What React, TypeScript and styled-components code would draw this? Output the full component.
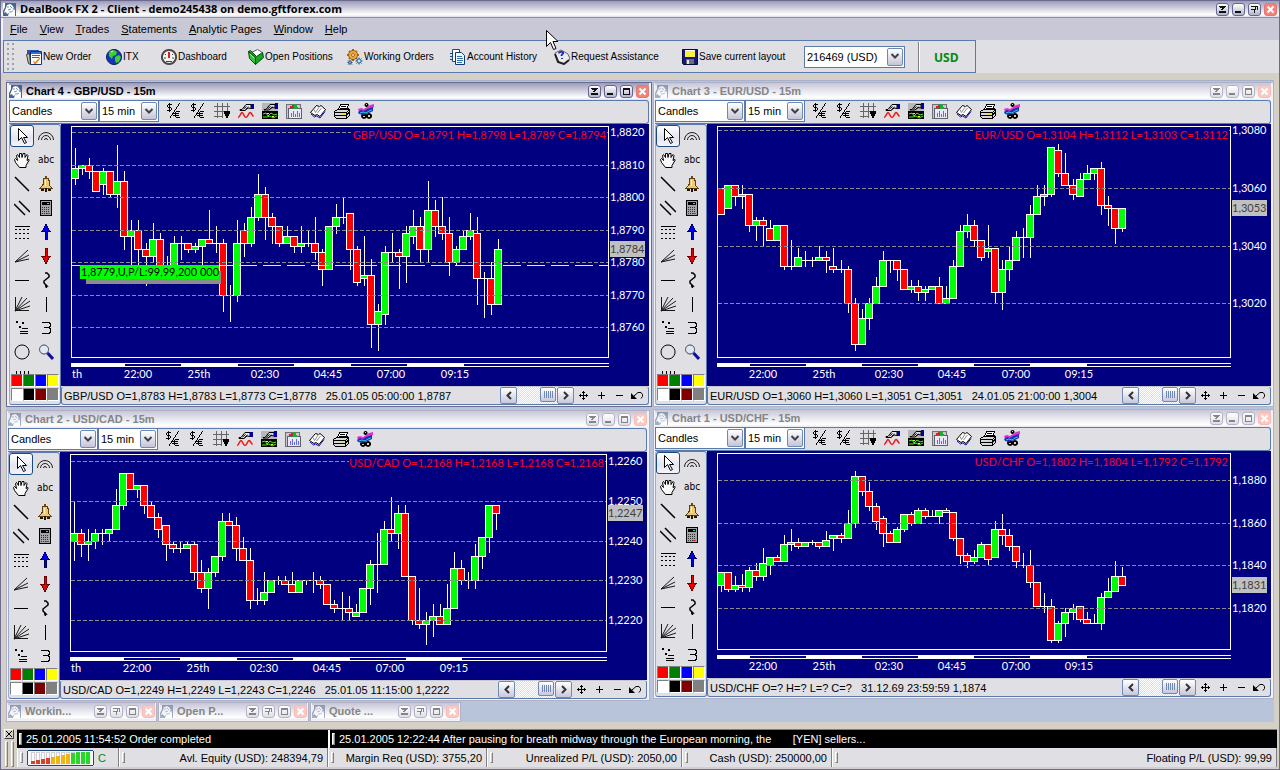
import React from "react";
import styled, { createGlobalStyle } from "styled-components";

const c = {
  face: "#e0dfe3",
  menu: "#c8c8d6",
  tan: "#d4d0c8",
  desk: "#b7c4da",
  line: "#5a7aae",
  edge: "#6b6b92",
  edgeOff: "#b0b0c6",
  navy: "#000080",
  up: "#00ff00",
  down: "#ff0000",
};

const GlobalStyle = createGlobalStyle`
  *, *::before, *::after { box-sizing: border-box; }
  body {
    margin: 0;
    background: ${c.tan};
    color: #000;
    font: 11px/14px "Liberation Sans", Arial, sans-serif;
  }
  button, select { font: inherit; color: inherit; padding: 0; margin: 0; border: 0; background: none; }
`;

/* ---------- market data: [open, high, low, close] in pips ---------- */

type Candle = [number, number, number, number];

const GBPUSD: Candle[] = [
  [8806, 8815, 8804, 8809], [8809, 8810, 8807, 8810], [8810, 8812, 8806, 8808], [8808, 8808, 8802, 8802],
  [8804, 8809, 8801, 8808], [8808, 8808, 8800, 8801], [8801, 8816, 8797, 8805], [8805, 8808, 8784, 8788],
  [8788, 8793, 8778, 8790], [8790, 8793, 8779, 8784], [8784, 8786, 8773, 8782], [8782, 8792, 8780, 8787],
  [8787, 8789, 8776, 8778], [8778, 8782, 8776, 8778], [8778, 8788, 8776, 8786], [8786, 8788, 8781, 8786],
  [8786, 8786, 8783, 8784], [8784, 8786, 8783, 8785], [8785, 8787, 8779, 8787], [8787, 8796, 8786, 8786],
  [8786, 8791, 8783, 8786], [8786, 8787, 8765, 8770], [8770, 8773, 8762, 8770], [8770, 8793, 8768, 8786],
  [8790, 8792, 8782, 8786], [8786, 8797, 8785, 8794], [8794, 8807, 8793, 8801], [8801, 8803, 8787, 8794],
  [8794, 8795, 8786, 8791], [8791, 8791, 8785, 8786], [8786, 8791, 8786, 8788], [8788, 8788, 8783, 8785],
  [8785, 8791, 8783, 8786], [8786, 8790, 8785, 8786], [8786, 8794, 8781, 8783], [8783, 8784, 8773, 8778],
  [8778, 8791, 8778, 8791], [8791, 8798, 8789, 8794], [8794, 8800, 8792, 8794], [8795, 8795, 8778, 8784],
  [8784, 8785, 8773, 8774], [8775, 8788, 8773, 8776], [8776, 8781, 8754, 8761], [8761, 8767, 8753, 8765],
  [8764, 8785, 8761, 8783], [8783, 8789, 8780, 8783], [8783, 8784, 8772, 8782], [8782, 8791, 8774, 8789],
  [8788, 8796, 8786, 8791], [8791, 8794, 8780, 8784], [8784, 8805, 8780, 8796], [8796, 8799, 8788, 8791],
  [8791, 8800, 8787, 8789], [8789, 8794, 8776, 8780], [8780, 8785, 8779, 8784], [8784, 8790, 8784, 8788],
  [8788, 8795, 8787, 8790], [8789, 8794, 8767, 8775], [8775, 8777, 8763, 8775], [8775, 8780, 8764, 8767],
  [8767, 8787, 8767, 8784],
];

const EURUSD: Candle[] = [
  [3060, 3060, 3051, 3051], [3053, 3061, 3053, 3061], [3061, 3061, 3054, 3057], [3057, 3061, 3053, 3058],
  [3058, 3058, 3045, 3047], [3047, 3050, 3042, 3049], [3049, 3050, 3040, 3047], [3046, 3049, 3042, 3042],
  [3042, 3047, 3042, 3047], [3047, 3047, 3032, 3033], [3033, 3042, 3032, 3033], [3033, 3039, 3033, 3036],
  [3035, 3038, 3033, 3035], [3035, 3036, 3033, 3035], [3035, 3040, 3035, 3036], [3036, 3038, 3031, 3035],
  [3033, 3039, 3031, 3032], [3032, 3035, 3031, 3032], [3032, 3033, 3017, 3020], [3020, 3022, 3004, 3006],
  [3006, 3018, 3006, 3015], [3015, 3022, 3011, 3020], [3020, 3029, 3020, 3026], [3026, 3038, 3026, 3035],
  [3035, 3035, 3031, 3035], [3035, 3035, 3028, 3032], [3032, 3032, 3025, 3025], [3025, 3028, 3024, 3026],
  [3026, 3028, 3021, 3024], [3024, 3026, 3021, 3025], [3025, 3026, 3025, 3026], [3026, 3029, 3020, 3020],
  [3020, 3026, 3020, 3022], [3022, 3035, 3022, 3033], [3033, 3047, 3033, 3045], [3045, 3051, 3043, 3047],
  [3047, 3049, 3040, 3042], [3042, 3042, 3035, 3036], [3038, 3047, 3036, 3039], [3039, 3039, 3020, 3024],
  [3024, 3035, 3018, 3032], [3032, 3040, 3028, 3035], [3035, 3045, 3035, 3043], [3043, 3046, 3036, 3043],
  [3043, 3054, 3036, 3051], [3051, 3061, 3051, 3057], [3057, 3061, 3054, 3058], [3058, 3074, 3057, 3074],
  [3073, 3075, 3064, 3065], [3065, 3072, 3061, 3061], [3061, 3063, 3056, 3058], [3057, 3065, 3057, 3063],
  [3063, 3068, 3063, 3065], [3065, 3067, 3063, 3067], [3067, 3069, 3051, 3054], [3054, 3057, 3047, 3053],
  [3053, 3053, 3041, 3046], [3046, 3053, 3045, 3053],
];

const USDCAD: Candle[] = [
  [2240, 2250, 2235, 2242], [2242, 2243, 2236, 2239], [2239, 2243, 2235, 2240], [2240, 2243, 2238, 2242],
  [2242, 2243, 2239, 2242], [2242, 2243, 2240, 2243], [2243, 2253, 2243, 2249], [2249, 2257, 2248, 2257],
  [2257, 2257, 2253, 2253], [2253, 2254, 2251, 2254], [2254, 2254, 2247, 2249], [2249, 2250, 2246, 2246],
  [2246, 2247, 2241, 2243], [2244, 2244, 2235, 2239], [2239, 2240, 2237, 2238], [2238, 2240, 2237, 2238],
  [2238, 2240, 2238, 2239], [2239, 2240, 2230, 2232], [2232, 2235, 2227, 2228], [2228, 2233, 2223, 2232],
  [2232, 2236, 2231, 2236], [2236, 2247, 2235, 2245], [2245, 2247, 2244, 2244], [2244, 2246, 2235, 2238],
  [2238, 2241, 2235, 2235], [2235, 2238, 2223, 2225], [2225, 2228, 2224, 2225], [2225, 2232, 2224, 2227],
  [2227, 2230, 2227, 2230], [2230, 2231, 2229, 2230], [2230, 2231, 2229, 2229], [2229, 2232, 2227, 2227],
  [2227, 2230, 2227, 2230], [2230, 2230, 2229, 2230], [2230, 2232, 2227, 2230], [2230, 2231, 2228, 2229],
  [2229, 2229, 2224, 2224], [2224, 2225, 2222, 2223], [2223, 2227, 2220, 2223], [2223, 2226, 2220, 2222],
  [2221, 2224, 2221, 2222], [2222, 2228, 2222, 2228], [2228, 2235, 2224, 2234], [2234, 2242, 2227, 2234],
  [2234, 2245, 2234, 2243], [2243, 2251, 2240, 2242], [2242, 2249, 2238, 2247], [2247, 2249, 2231, 2231],
  [2231, 2231, 2219, 2220], [2220, 2228, 2218, 2219], [2219, 2222, 2214, 2220], [2220, 2224, 2216, 2221],
  [2221, 2224, 2219, 2219], [2219, 2229, 2219, 2223], [2223, 2237, 2223, 2233], [2233, 2235, 2229, 2230],
  [2230, 2232, 2228, 2230], [2230, 2239, 2228, 2236], [2236, 2241, 2233, 2241], [2241, 2249, 2237, 2249],
  [2249, 2249, 2243, 2247],
];

const USDCHF: Candle[] = [
  [1831, 1837, 1828, 1837], [1837, 1837, 1828, 1829], [1829, 1835, 1828, 1831], [1831, 1836, 1828, 1830],
  [1830, 1839, 1828, 1838], [1838, 1841, 1833, 1835], [1835, 1848, 1833, 1841], [1840, 1844, 1836, 1844],
  [1844, 1845, 1842, 1842], [1842, 1854, 1842, 1850], [1850, 1857, 1847, 1851], [1851, 1853, 1848, 1849],
  [1849, 1851, 1849, 1851], [1851, 1852, 1850, 1851], [1851, 1851, 1848, 1849], [1849, 1856, 1849, 1852],
  [1853, 1854, 1847, 1854], [1854, 1855, 1851, 1853], [1853, 1866, 1853, 1860], [1860, 1884, 1858, 1882],
  [1882, 1882, 1873, 1875], [1875, 1879, 1866, 1868], [1868, 1869, 1857, 1861], [1862, 1863, 1849, 1855],
  [1855, 1856, 1851, 1851], [1851, 1858, 1851, 1857], [1857, 1864, 1856, 1864], [1864, 1865, 1859, 1860],
  [1860, 1867, 1860, 1866], [1866, 1867, 1862, 1863], [1863, 1866, 1863, 1863], [1863, 1866, 1860, 1866],
  [1866, 1867, 1865, 1865], [1865, 1865, 1852, 1853], [1853, 1853, 1841, 1845], [1845, 1846, 1839, 1842],
  [1842, 1847, 1841, 1844], [1844, 1851, 1844, 1850], [1850, 1850, 1840, 1843], [1844, 1861, 1844, 1857],
  [1857, 1864, 1850, 1854], [1854, 1857, 1847, 1849], [1849, 1849, 1839, 1842], [1840, 1846, 1839, 1840],
  [1840, 1847, 1830, 1832], [1832, 1832, 1821, 1821], [1821, 1827, 1818, 1821], [1821, 1824, 1804, 1805],
  [1805, 1814, 1804, 1813], [1813, 1820, 1807, 1818], [1818, 1822, 1815, 1820], [1821, 1821, 1814, 1815],
  [1815, 1818, 1813, 1813], [1813, 1817, 1813, 1813], [1813, 1827, 1810, 1825], [1825, 1834, 1825, 1828],
  [1828, 1842, 1828, 1835], [1835, 1839, 1831, 1831],
];

/* ---------- application frame ---------- */

const Frame = styled.div`
  position: relative;
  min-height: 100vh;
  display: flex;
  flex-direction: column;
  background: ${c.tan};
  border: 1px solid ${c.edge};
`;

const TitleBar = styled.header<{ $off?: boolean }>`
  display: flex;
  align-items: center;
  gap: 4px;
  height: 17px;
  padding-bottom: 1px;
  background: ${(p) =>
    p.$off
      ? "linear-gradient(#c6c6d8, #e6e6ee 45%, #ffffff 85%, #e8e8f0)"
      : "linear-gradient(#9c9cba, #cfcfde 45%, #ffffff 85%, #dcdce8)"};
  color: ${(p) => (p.$off ? "#858585" : "#000")};
`;

const MainTitle = styled(TitleBar)`
  padding: 0 2px;
  border-bottom: 1px solid #8c8cac;
`;

const TitleText = styled.h2`
  flex: 1;
  margin: 0;
  font-size: 11px;
  font-weight: bold;
  white-space: nowrap;
  overflow: hidden;
`;

const AppName = styled.h1`
  flex: 1;
  margin: 0;
  font: bold 11px/14px "Open Sans", "Liberation Sans", sans-serif;
`;

const Caption = styled.div`
  display: flex;
  gap: 3px;
`;

const CapButton = styled.button<{ $off?: boolean; $close?: boolean }>`
  width: 13px;
  height: 13px;
  display: grid;
  place-items: center;
  border: 1px solid ${(p) => (p.$close ? (p.$off ? "#f6bcb4" : "#e07a70") : p.$off ? "#b4b4c6" : "#66668c")};
  border-radius: 3px;
  background: ${(p) =>
    p.$close
      ? p.$off ? "#fbc8c2" : "#f2827a"
      : p.$off ? "linear-gradient(#fff, #dedee8)" : "linear-gradient(#fff, #b4b4cc)"};
  color: ${(p) => (p.$close ? "#fff" : p.$off ? "#858585" : "#111")};
`;

const MenuBar = styled.nav`
  display: flex;
  align-items: center;
  gap: 12px;
  height: 22px;
  padding: 0 7px;
  background: ${c.menu};
  border-left: 2px solid #f4f4f8;
`;

const MenuLink = styled.button`
  &::first-letter { text-decoration: underline; }
  display: block;
`;

const ToolRow = styled.div`
  display: flex;
  height: 33px;
  padding-left: 2px;
  background: ${c.face};
`;

const MainTools = styled.div`
  display: flex;
  align-items: center;
  width: 973px;
  border: 1px solid ${c.line};
  padding-left: 3px;
`;

const DotGrip = styled.span`
  width: 7px;
  height: 27px;
  margin-right: 12px;
  background: radial-gradient(circle at 1px 1px, #a0a0a4 1px, transparent 1px) 0 0 / 5px 5px;
`;

const ToolButton = styled.button<{ $w: number }>`
  display: flex;
  align-items: center;
  gap: 1px;
  width: ${(p) => p.$w}px;
  font-size: 10px;
  white-space: nowrap;
  text-align: left;
`;

const Divider = styled.span`
  width: 2px;
  height: 30px;
  margin: 0 14px 0 13px;
  background: #808080;
  border-right: 1px solid #fff;
`;

const Currency = styled.strong`
  padding-top: 3px;
  font: bold 12px/16px "Open Sans", "Liberation Sans", sans-serif;
  color: #008a0e;
`;

const ComboBox = styled.span<{ $w: number }>`
  display: grid;
  grid-template-columns: 1fr;
  align-items: center;
  width: ${(p) => p.$w}px;
  height: 22px;
  border: 1px solid ${c.line};
  background: #fff;
  & > * { grid-area: 1 / 1; }
`;

const Select = styled.select`
  appearance: none;
  width: 100%;
  height: 20px;
  padding-left: 2px;
  outline: none;
`;

const Drop = styled.span`
  justify-self: end;
  display: grid;
  place-items: center;
  width: 16px;
  height: 18px;
  margin-right: 1px;
  border: 1px solid #7088b4;
  border-radius: 2px;
  background: linear-gradient(#fff, #c4c4d8);
  pointer-events: none;
`;

/* ---------- desktop and chart windows ---------- */

const Desktop = styled.main`
  flex: 1;
  margin: 7px 5px 0;
  background: ${c.desk};
  padding-top: 1px;
  border-top: 1px solid #a4b2cc;
`;

const Charts = styled.div`
  display: grid;
  grid-template-columns: 646fr 621fr;
  gap: 1px;
`;

const Column = styled.div`
  display: flex;
  flex-direction: column;
  min-width: 0;
`;

type Slot = "topLeft" | "bottomLeft" | "topRight" | "bottomRight";

const slotMargin: Record<Slot, string> = {
  topLeft: "0",
  bottomLeft: "3px 2px 0 0",
  topRight: "0",
  bottomRight: "2px 0 0",
};

const Window = styled.section<{ $off?: boolean; $slot?: Slot }>`
  border: 1px solid ${(p) => (p.$off ? c.edgeOff : c.edge)};
  padding: 0 2px 1px ${(p) => (p.$slot === "topLeft" ? 2 : 1)}px;
  margin: ${(p) => (p.$slot ? slotMargin[p.$slot] : "0")};
  background: #f2f2f8;
`;

const ChartTools = styled.div`
  display: flex;
  align-items: flex-start;
  height: 24px;
  border: 1px solid ${c.line};
  border-radius: 0 3px 3px 0;
  border-left: 0;
  border-top: 0;
  background: ${c.face};
  box-shadow: inset 0 1px ${c.line};
`;

const IconStrip = styled.div`
  display: flex;
  gap: 8px;
  margin: 3px 0 0 7px;
`;

const IconButton = styled.button`
  width: 16px;
  height: 16px;
  display: block;
`;

const ChartBody = styled.div`
  display: flex;
`;

const Palette = styled.aside`
  display: flex;
  flex-direction: column;
  width: 52px;
  padding: 0 1px 2px 0;
  border: 1px solid ${c.line};
  border-left-color: #9aaccc;
  border-radius: 3px;
  background: ${c.face};
`;

const Tools = styled.div`
  flex-grow: 1;
  height: 0;
  overflow: hidden;
  display: grid;
  grid-template-columns: 24px 24px;
  grid-auto-rows: 24px;
`;

const Tool = styled.button<{ $on?: boolean }>`
  display: grid;
  place-items: center;
  width: 24px;
  height: 22px;
  border: ${(p) => (p.$on ? "1px solid #1c4a80" : "0")};
  border-radius: 3px;
  background: ${(p) => (p.$on ? "linear-gradient(#fff, #e4e4f0 60%, #f4f4fa)" : "none")};
`;

const Swatches = styled.div`
  display: grid;
  grid-template-columns: repeat(4, 12px);
  grid-auto-rows: 14px;
  padding-left: 1px;
`;

const Swatch = styled.button<{ $c: string }>`
  width: 12px;
  height: 13px;
  border: 1px solid;
  border-color: #808080 #fff #fff #808080;
  background: ${(p) => p.$c};
`;

const Plot = styled.div`
  flex: 1;
  min-width: 0;
  display: flex;
  flex-direction: column;
`;

const Canvas = styled.svg`
  display: block;
  width: 100%;
  background: ${c.navy};
  font: 11px Lato, "Liberation Sans", sans-serif;
`;

const InfoBar = styled.footer`
  display: flex;
  align-items: center;
  height: 19px;
  padding-left: 2px;
  border: 1px solid ${c.line};
  border-top-color: #c8c8d0;
  border-radius: 3px;
  background: ${c.face};
  white-space: pre;
`;

const Readout = styled.span`
  flex: 1;
  overflow: hidden;
`;

const Scroller = styled.div`
  display: flex;
  height: 17px;
  width: 74px;
  background: repeating-conic-gradient(#fff 0 25%, #dcdce2 0 50%) 0 0 / 2px 2px;
`;

const ScrollButton = styled.button<{ $thumb?: boolean }>`
  display: grid;
  place-items: center;
  width: ${(p) => (p.$thumb ? 16 : 17)}px;
  height: ${(p) => (p.$thumb ? 15 : 17)}px;
  margin-left: ${(p) => (p.$thumb ? "auto" : "0")};
  margin-right: ${(p) => (p.$thumb ? 1 : 0)}px;
  border: 1px solid #7088b4;
  border-radius: 2px;
  background: linear-gradient(#fff, #c8c8dc);
`;

const ZoomTools = styled.div`
  display: flex;
  align-items: center;
  width: 74px;
  & > button { width: 18px; height: 14px; display: grid; place-items: center; }
`;

const Minimized = styled.div`
  display: flex;
  gap: 1px;
  height: 20px;
  margin-top: 1px;
`;

const MinWindow = styled(Window)`
  width: 151px;
  padding: 0 1px 1px;
`;

/* ---------- bottom bars ---------- */

const Bottom = styled.footer`
  display: flex;
  gap: 3px;
  height: 47px;
  padding: 7px 2px 0 3px;
  background: ${c.tan};
`;

const DockHandle = styled.div`
  width: 10px;
  display: flex;
  flex-direction: column;
  align-items: center;
  gap: 2px;
`;

const DockClose = styled.button`
  display: grid;
  place-items: center;
  width: 10px;
  height: 10px;
  border: 1px solid;
  border-color: #fff #404040 #404040 #fff;
  background: ${c.tan};
`;

const Grip = styled.span<{ $h: number }>`
  flex: none;
  width: 3px;
  height: ${(p) => p.$h}px;
  border: 1px solid;
  border-color: #fff #808080 #808080 #fff;
  background: ${c.tan};
`;

const Rows = styled.div`
  flex: 1;
  min-width: 0;
`;

const Ticker = styled.div`
  display: grid;
  grid-template-columns: 311px 1fr;
  gap: 2px;
  height: 19px;
  border-top: 1px solid #808080;
  background: #fff;
`;

const News = styled.div`
  display: flex;
  align-items: center;
  gap: 4px;
  padding-left: 2px;
  background: #000;
  color: #fff;
  white-space: pre;
  overflow: hidden;
`;

const Status = styled.div`
  display: flex;
  height: 19px;
  background: ${c.face};
`;

const Cell = styled.div<{ $w?: number }>`
  display: flex;
  align-items: center;
  justify-content: space-between;
  flex: ${(p) => (p.$w ? "none" : "1")};
  width: ${(p) => (p.$w ? p.$w + "px" : "auto")};
  padding: 0 4px 0 3px;
  border-right: 1px solid #808080;
  box-shadow: inset 1px 0 #fff;
  white-space: nowrap;
`;

const LedCell = styled(Cell)`
  justify-content: flex-start;
  gap: 4px;
  color: #008a0e;
`;

const Cursor = styled.svg`
  position: absolute;
  left: 544px;
  top: 28px;
  pointer-events: none;
`;

/* ---------- glyphs ---------- */

type P = { d: string; s?: string; f?: string; w?: number };

/* A square drawing built from a list of strokes and fills. */
function Glyph({ parts, size = 16, smooth }: { parts: P[]; size?: number; smooth?: boolean }) {
  return (
    <svg width={size} height={size} viewBox={`0 0 ${size} ${size}`} aria-hidden="true" display="block" shapeRendering={smooth ? "auto" : "crispEdges"}>
      {parts.map((p, i) => (
        <path key={i} d={p.d} stroke={p.s ?? "none"} fill={p.f ?? "none"} strokeWidth={p.w ?? 1} />
      ))}
    </svg>
  );
}

const K = "#000";

const capGlyphs: Record<string, P[]> = {
  roll: [{ d: "M2 2h7v1h-7zM3 3h5v1h-1v1h-1v1h-2v-1h1v-1h-2zM2 7h7v2h-7z", f: "currentColor" }],
  min: [{ d: "M2 7h6v2h-6z", f: "currentColor" }],
  max: [{ d: "M2 2h7v2h-7zM2 4h1v5h-1zM8 4h1v5h-1zM2 8h7v1h-7z", f: "currentColor" }],
  restore: [{ d: "M2 2h7v1h-7zM8 2h1v4h-1zM2 5h5v1h-5zM5 5h1v4h-1zM6 2h1v4h-1z", f: "currentColor" }],
  close: [{ d: "M2.500 2.500l6 6M8.500 2.500l-6 6", s: "currentColor", w: 2 }],
};

function CaptionButtons({ off, kinds }: { off?: boolean; kinds: string[] }) {
  return (
    <Caption>
      {kinds.map((k) => (
        <CapButton key={k} $off={off} $close={k === "close"} aria-label={k}>
          <Glyph parts={capGlyphs[k]} size={11} smooth={k === "close"} />
        </CapButton>
      ))}
    </Caption>
  );
}

function Lion({ off }: { off?: boolean }) {
  return (
    <svg width="13" height="13" viewBox="0 0 13 13" aria-hidden="true" opacity={off ? 0.5 : 1}>
      <rect width="13" height="13" fill="#48668a" />
      <path d="M0 0h2v4L0 8zM3 5l1-3 3-1 2 1 2 3 1 3v5H5l1-3-2 1-1-2-2 1 1-3z" fill="#fff" />
      <path d="M4 4h2M7 3l2 2M5 7l3-1M8 9l2-1M10 5l1 2M6 9h2" stroke="#7b93b2" fill="none" />
    </svg>
  );
}

const mainIcons: Record<string, P[]> = {
  order: [
    { d: "M1 1h12v4h-12z", f: "#2456b0" }, { d: "M0.500 5.500l3-1 1 11-2-1z", f: "#d8c8a0", s: "#3c3428" },
    { d: "M4.500 2.500h11v13h-11z", f: "#fff", s: "#18306c" }, { d: "M5 3h10v2h-10z", f: "#2f6fd0" },
    { d: "M6 6.500h8M6 8.500h7", s: "#3c60a8" }, { d: "M7 11l2 2 5-5v2l-4 5h-2z", f: "#f08a1c" },
  ],
  globe: [
    { d: "M8 0.500a7.500 7.500 0 1 0 .1 0z", f: "#1636b8", s: "#0a1a60" },
    { d: "M4 2l4-1 3 2-1 3-3 1-1 3-3-3v-3zM9 8l4-2 2 2-2 5-3 1-1-3z", f: "#3fd02c" },
    { d: "M5 3l2-1", s: "#d8ffd0" },
  ],
  gauge: [
    { d: "M8 1a7 7 0 1 0 .1 0z", f: "#f4f4f6", s: "#484848", w: 2 },
    { d: "M8 3v6", s: "#e02010", w: 2 }, { d: "M3 9h2M11 9h2M4 5l1 1M12 5l-1 1M5 12.500h6", s: "#404050" },
  ],
  folder: [
    { d: "M3.500 3.500l6-3 5 3v6l-6 3z", f: "#fff", s: "#606060" },
    { d: "M0.500 2.500l2-1 2 2 4 4 6-4 1 5-8 7z", f: "#18a424", s: "#064a0c" },
    { d: "M.500 2.500l7 6v7l-6-6z", f: "#2fc83c", s: "#064a0c" }, { d: "M2 5l4 4", s: "#a8f4a0" },
  ],
  gears: [
    { d: "M6 0v12M0 6h12M2 2l8 8M10 2l-8 8", s: "#a8680c", w: 2 },
    { d: "M6 1.500a4.500 4.500 0 1 0 .1 0z", f: "#eda83a", s: "#9a5c08" }, { d: "M6 4.500a1.500 1.500 0 1 0 .1 0z", f: "#e0dfe3", s: "#9a5c08" },
    { d: "M12 8.500v7M8.500 12h7M9.500 9.500l5 5M14.500 9.500l-5 5", s: "#184f80" }, { d: "M12 10a2 2 0 1 0 .1 0z", f: "#cfe4f4", s: "#2870a8" },
    { d: "M3 11v5M.500 13.500h5M1 11.500l4 4M5 11.500l-4 4", s: "#184f80" }, { d: "M2.500 13h1v1h-1z", f: "#fff" },
  ],
  pages: [
    { d: "M2.500.500h7v12h-7z", f: "#fff", s: "#1c4a80" }, { d: "M0 4.500h3M0 7.500h3M0 10.500h3", s: "#1c4a80" },
    { d: "M5.500 3.500h6l3 3v9h-9z", f: "#f2f8ff", s: "#12386c" }, { d: "M7 7.500h5M7 9.500h6M7 11.500h6M7 13.500h5", s: "#2a70b8" },
  ],
  help: [
    { d: "M1 4l6-3 7 4 2 5-6 5-5-2z", f: "#ececf0", s: "#666" }, { d: "M1 5l3 8 6 2 5-4", s: "#222", w: 2 },
    { d: "M5 4.500c0-2.500 5-2 4 0-1 1-1.500 1-1.500 2.500M8 9v1", s: "#2038c0", w: 2 },
  ],
  save: [
    { d: "M.500.500h15v15h-14l-1-1z", f: "#16187c", s: "#08083c" }, { d: "M3 1h10v7h-10z", f: "#f8f03c" },
    { d: "M3 1h10v1h-10z", f: "#fff" }, { d: "M4 10h8v5h-8z", f: "#6c6c74" }, { d: "M5 11h2v4h-2z", f: "#e8e8f0" },
  ],
};

const chartIcons: { name: string; parts: P[]; smooth?: boolean }[] = [
  ...["Convert", "Convert back"].map((name) => ({
    name,
    parts: [
      { d: "M2 1h4v1h-4zM1 2h1v2h-1zM2 4h3v1h-3zM5 5h1v2h-1zM1 7h4v1h-4zM3 0h1v9h-1z", f: K },
      { d: "M13 0h1v1h-1zM12 1h1v2h-1zM11 3h1v1h-1zM10 4h1v2h-1zM9 6h1v1h-1zM8 7h1v2h-1zM7 9h1v1h-1zM6 10h1v2h-1zM5 12h1v1h-1zM4 13h1v2h-1z", f: K },
      { d: "M10 8h4v1h-4zM9 9h1v5h-1zM10 14h4v1h-4zM7 10h6v1h-6zM7 12h6v1h-6z", f: K },
    ] as P[],
  })),
  { name: "Grid", parts: [{ d: "M3.500 0v15M8.500 0v15M13.500 0v8M0 3.500h16M0 8.500h16M0 13.500h9", s: "#666" }, { d: "M10 8h6v3h-1v2h-1v2h-2v-2h-1v-2h-1z", f: K }] },
  { name: "Indicators", smooth: true, parts: [{ d: "M2 6.500h2l4-5h5v4l-3-.500-3 2.500h-5z", f: "#e8e8e8", s: K }, { d: "M5.500 6l3-2.500M7.500 6.500l3-2.500", s: K }, { d: "M13 1h3v5h-3z", f: "#0000a0" }, { d: "M0 14.500c2 0 2.500-5 4-5s2 5 4 5 2.500-5 4-5 2 3 3.500 4", s: "#f01010", w: 1.5 }] },
  { name: "Edit study", smooth: true, parts: [{ d: "M0 0h16v8h-16z", f: "#b8b8bc" }, { d: "M2 6.500h2l4-5h5v3.500l-3-.500-3 2.500h-5z", f: "#d8d8d8", s: K }, { d: "M5.500 6l3-2.500M7.500 6.500l3-2.500", s: K }, { d: "M13 0h3v6h-3z", f: "#0000a0" }, { d: "M0 8h16v8h-16z", f: K }, { d: "M1 11l3-1 2 3 3-3 3 2 3-1M1 14l4 0 3-1 3 2 4-2", s: "#50f020" }, { d: "M5 10.500h2M10 13.500h2", s: "#fff040" }] },
  { name: "Statistics", parts: [{ d: "M.500 1.500h14v14h-14z", f: "#c8c8cc", s: "#707078" }, { d: "M2.500 5.500h13v10h-13z", f: "#e8e8f8", s: "#606068" }, { d: "M4 5v-2h2v-1h2v3z", f: "#e02020" }, { d: "M8 1h2v1h1v2h1v2h-4z", f: "#10b030" }, { d: "M5.500 14v-4M7.500 14v-6M9.500 14v-3M11.500 14v-6M13.500 14v-4", s: "#6868d8" }] },
  { name: "Notebook", smooth: true, parts: [{ d: "M.500 9.500l6-7 3 1 1.500-1 4.500 4-5.500 7-3-2-2 1z", f: "#fff", s: K }, { d: "M9.500 3.500l-4 6M11.500 5l-4 5M4 6.500l1.500 3", s: "#909090" }, { d: "M1 11l3.500 3 2-1 3.500 2 5-6.500", s: "#1010c0" }] },
  { name: "Print", parts: [{ d: "M4.500 6.500l2-5h8l-2 5z", f: "#fff", s: K }, { d: "M7 3.500h5M6 5.500h6", s: K }, { d: "M.500 8.500l3-2h9l2-1 1 2v5l-3 3h-10l-2-2z", f: "#d8d8dc", s: K }, { d: "M1 9.500h11l3-2M1 12.500h11l3-3M12.500 9v6", s: K }, { d: "M8 11h3v1h-3z", f: "#e8d820" }] },
  { name: "Template", smooth: true, parts: [{ d: "M8.500 0a2 2 0 1 0 .1 0zM6 10a3 3 0 1 0 .1 0zM11 10a3 3 0 1 0 .1 0z", f: K }, { d: "M8 1h1v1h-1zM5 13h2v1h-2zM10 12h2v2h-2z", f: "#e0d098" }, { d: "M0 6l3-1 3 1 3-2 3-2 4-1v3l-4 3-4 1-3 2-4-1z", f: "#e030d0" }, { d: "M0 9l3-2 3 1 3-2 3-1 3-1v4l-4 2-3 1-3 1-4-1z", f: "#1830b8" }, { d: "M2 10l3-1 3 1 3-2 3-1", s: "#30c8d8" }] },
];

const toolIcons: { name: string; parts?: P[]; smooth?: boolean }[] = [
  { name: "Pointer", parts: [{ d: "M4.500.500v12l3-3 3 6 2-1-3-5h4z", f: "#fff", s: K }], smooth: true },
  { name: "Arcs", parts: [{ d: "M.500 12a7.500 7.500 0 0 1 15 0M3.500 12a4.500 4.500 0 0 1 9 0M6.500 12a1.500 1.500 0 0 1 3 0", s: "#202020" }], smooth: true },
  { name: "Hand", parts: [{ d: "M5.500 15.500l-4-5-1-3 1-1 2 2-1-5 1-1 2 3v-4h2l.500 4 1-4h2v4l2-3 1 1-1 5 2-1v1l-3 5v2z", f: "#f8f8f8", s: K }], smooth: true },
  { name: "Text" },
  { name: "Line", parts: [{ d: "M1 1l14 14", s: K, w: 1.5 }], smooth: true },
  { name: "Alert", parts: [{ d: "M7 0h2v2h-2z", f: "#6a4a10" }, { d: "M6 2.500h4l1 2v4l3 4h-12l3-4v-4z", f: "#eec878", s: "#60430c" }, { d: "M7 4v6", s: "#fff4c8" }, { d: "M3 13h3v2h-3zM10 13h3v2h-3zM7 12h2v4h-2z", f: "#201404" }] },
  { name: "Channel", parts: [{ d: "M0 4l11 11M5 1l11 11", s: K, w: 1.5 }], smooth: true },
  { name: "Calculator", parts: [{ d: "M2.500.500h11v15h-11z", f: "#a4a4a8", s: K }, { d: "M4 2h8v3h-8z", f: K }, { d: "M9 3h2v1h-2z", f: "#20e0e0" }, { d: "M4.500 7v7M6.500 7v7M8.500 7v7M10.500 7v5", s: "#303030", w: 1 }, { d: "M4 8.500h8M4 10.500h8M4 12.500h8", s: "#a4a4a8" }, { d: "M9 13h3v1h-3z", f: "#f02020" }] },
  { name: "Levels", parts: [{ d: "M1 2.500h15M1 5.500h2m2 0h2m2 0h2m2 0h2M1 9.500h2m2 0h2m2 0h2m2 0h2M1 14.500h2m2 0h2m2 0h2m2 0h2", s: K }] },
  { name: "Arrow up", parts: [{ d: "M8 0.500l4 7h-3v8h-2v-8h-3z", f: "#0000f0", s: "#000060" }] },
  { name: "Fan", parts: [{ d: "M1 14L14 2M1 14L15 7M1 14l14-3", s: "#181818" }], smooth: true },
  { name: "Arrow down", parts: [{ d: "M8 15.500l4-7h-3v-8h-2v8h-3z", f: "#f00000", s: "#700000" }] },
  { name: "Horizontal", parts: [{ d: "M1 8.500h14", s: K }] },
  { name: "Wave", parts: [{ d: "M7 1h2l2 2v2l-5 4v2l3 3h-2M9 14l-1 2", s: K, w: 1.5 }], smooth: true },
  { name: "Gann fan", parts: [{ d: "M1.500 15V1M1 15L8 1M1 15L13 2M1 15L16 5M1 15l15-5M1 14.500h14", s: "#181818" }], smooth: true },
  { name: "Vertical", parts: [{ d: "M8.500 1v15", s: K }] },
  { name: "Points", parts: [{ d: "M2 1h2v2h-2zM8 2h2v2h-2zM5 6h2v2h-2z", f: K }, { d: "M8 8.500h6M6 11.500h8M6 13.500h8", s: K }] },
  { name: "Cycle", parts: [{ d: "M4 2.500h7l1 1v3l-1 1h-5M11 7.500l1 1v4l-1 1h-7", s: K }] },
  { name: "Ellipse", parts: [{ d: "M8 1a7 7 0 1 0 .1 0z", s: K }], smooth: true },
  { name: "Magnifier", parts: [{ d: "M6 1a4.500 4.500 0 1 0 .1 0z", f: "#dceaf8", s: "#404040" }, { d: "M9.500 9l5.500 6", s: "#1010a0", w: 3 }], smooth: true },
  { name: "Periods", parts: [{ d: "M2.500 3v3m0 1v3M6.500 3v3m0 1v3M10.500 3v3m0 1v3M14.500 3v3m0 1v3", s: K }] },
];

const swatchColors = ["#ff0000", "#008000", "#0000ff", "#ffff00", "#ffffff", "#000000", "#800000", "#808080"];

function Combo({ label, value, width }: { label: string; value: string; width: number }) {
  return (
    <ComboBox $w={width}>
      <Select aria-label={label} defaultValue={value}>
        <option>{value}</option>
      </Select>
      <Drop>
        <svg width="10" height="7" viewBox="0 0 10 7" aria-hidden="true">
          <path d="M1.500 1l3.500 3.500L8.500 1" fill="none" stroke="#404048" strokeWidth="2" />
        </svg>
      </Drop>
    </ComboBox>
  );
}

/* ---------- candlestick plot ---------- */

interface ChartSpec {
  title: string;
  summary: string;
  readout: string;
  data: Candle[];
  width: number;
  height: number;
  step: number;
  ref: number;
  refY: number;
  perPip: number;
  grid: number[];
  last: number;
  times: [string, number][];
  bands: number[];
  ticketAt?: number;
}

const price = (v: number) => "1," + String(v).padStart(4, "0");

function CandlePlot({ s }: { s: ChartSpec }) {
  const L = 10;
  const T = 2;
  const R = L + s.width;
  const B = T + s.height;
  const y = (v: number) => Math.round(s.refY + (s.ref - v) * s.perPip);
  return (
    <Canvas height={s.height + 30} role="img" aria-label={s.title} shapeRendering="crispEdges">
      <rect x={L + 0.5} y={T + 0.5} width={s.width - 1} height={s.height - 1} fill="none" stroke="#fff" />
      {s.data.map(([o, h, l, cl], i) => {
        const x = L + 4 + Math.round(i * s.step);
        const top = y(Math.max(o, cl));
        const tall = y(Math.min(o, cl)) - top;
        return (
          <g key={i}>
            <path d={`M${x + 0.5} ${y(h)}V${y(l) + 1}`} stroke="#fff" />
            {tall > 0 ? (
              <rect x={x - 3.5} y={top + 0.5} width="7" height={tall} fill={cl > o ? c.up : c.down} stroke="#fff" />
            ) : (
              <path d={`M${x - 4} ${top + 0.5}h8`} stroke="#fff" />
            )}
          </g>
        );
      })}
      {s.grid.map((g) => (
        <path key={g} d={`M${L + 1} ${y(g) + 0.5}H${R - 1}`} stroke="#8c8c8c" strokeDasharray="4 2" />
      ))}
      {s.ticketAt && (
        <g>
          <path d={`M${L} ${y(s.ticketAt) + 0.5}H${R - 1}`} stroke="#ffff30" strokeDasharray="18 6" />
          <rect x="25" y="147" width="135" height="13" fill="#8c8c8c" />
          <rect x="19" y="141" width="139" height="14" fill="#00ff00" />
          <text x="20" y="152" fill="#000">1,8779,U,P/L:99,99,200 000</text>
        </g>
      )}
      <rect x={R - 258} y={T + 3} width="256" height="13" fill={c.navy} />
      <text x={R - 3} y={T + 13} textAnchor="end" fill="#f80020">{s.summary}</text>
      {s.grid.map((g) => (
        <text key={g} x={R + 1} y={y(g) + 4} fill="#fff">{price(g)}</text>
      ))}
      <rect x={R + 1} y={y(s.last) - 8} width="35" height="16" fill="#c0c0c0" />
      <text x={R + 1} y={y(s.last) + 4} fill="#404040">{price(s.last)}</text>
      <rect x={L} y={B + 5} width={s.width} height="4" fill="#fff" />
      {s.bands.map((b, i) => (
        <rect key={b} x={L + b} y={B + 6} width={i === 3 ? s.width - b : 56} height="2" fill={c.navy} />
      ))}
      {s.times.map(([t, x]) => (
        <text key={t} x={L + x} y={B + 20} textAnchor="middle" fill="#fff">{t}</text>
      ))}
    </Canvas>
  );
}

function ChartWindow({ s, off, slot }: { s: ChartSpec; off?: boolean; slot: Slot }) {
  return (
    <Window $off={off} $slot={slot}>
      <TitleBar $off={off}>
        <Lion off={off} />
        <TitleText>{s.title}</TitleText>
        <CaptionButtons off={off} kinds={["roll", "min", "max", "close"]} />
      </TitleBar>
      <ChartTools>
        <Combo label="Chart style" value="Candles" width={90} />
        <Combo label="Period" value="15 min" width={60} />
        <IconStrip>
          {chartIcons.map((i) => (
            <IconButton key={i.name} aria-label={i.name}><Glyph parts={i.parts} smooth={i.smooth} /></IconButton>
          ))}
        </IconStrip>
      </ChartTools>
      <ChartBody>
        <Palette>
          <Tools>
            {toolIcons.map((t, i) => (
              <Tool key={t.name} $on={i === 0} aria-label={t.name}>
                {t.parts ? <Glyph parts={t.parts} smooth={t.smooth} /> : <Abc>abc</Abc>}
              </Tool>
            ))}
          </Tools>
          <Swatches>
            {swatchColors.map((w) => <Swatch key={w} $c={w} aria-label={w} />)}
          </Swatches>
        </Palette>
        <Plot>
          <CandlePlot s={s} />
          <InfoBar>
            <Readout>{s.readout}</Readout>
            <Scroller>
              <ScrollButton aria-label="Scroll left">
                <svg width="8" height="9" aria-hidden="true"><path d="M6 1L2.500 4.500 6 8" fill="none" stroke="#333" strokeWidth="2" /></svg>
              </ScrollButton>
              <ScrollButton $thumb aria-label="Scroll position">
                <svg width="10" height="7" aria-hidden="true" shapeRendering="crispEdges"><path d="M1.500 0v7M3.500 0v7M5.500 0v7M7.500 0v7M9.500 0v7" stroke="#7088b4" /></svg>
              </ScrollButton>
              <ScrollButton aria-label="Scroll right">
                <svg width="8" height="9" aria-hidden="true"><path d="M2 1l3.500 3.500L2 8" fill="none" stroke="#333" strokeWidth="2" /></svg>
              </ScrollButton>
            </Scroller>
            <ZoomTools>
              <button aria-label="Move"><Glyph size={9} parts={[{ d: "M4.500 0v9M0 4.500h9M3 1.500h3M3 7.500h3M1.500 3v3M7.500 3v3", s: K }]} /></button>
              <button aria-label="Zoom in"><Glyph size={9} parts={[{ d: "M4.500 1v7M1 4.500h7", s: K }]} /></button>
              <button aria-label="Zoom out"><Glyph size={9} parts={[{ d: "M1 4.500h7", s: K }]} /></button>
              <button aria-label="Undo"><Glyph size={12} smooth parts={[{ d: "M0 3v6h6z", f: K }, { d: "M3 6l4-3.500h3l1.500 2v2l-1.500 2", s: K }]} /></button>
            </ZoomTools>
          </InfoBar>
        </Plot>
      </ChartBody>
    </Window>
  );
}

const Abc = styled.span`
  font: 10px/12px "DejaVu Sans Condensed", "Liberation Sans", sans-serif;
`;

const leftTimes: [string, number][] = [["th", 6], ["22:00", 67], ["25th", 128], ["02:30", 194], ["04:45", 257], ["07:00", 320], ["09:15", 384]];
const rightTimes: [string, number][] = [["22:00", 46], ["25th", 107], ["02:30", 172], ["04:45", 235], ["07:00", 299], ["09:15", 362]];

const chart4: ChartSpec = {
  title: "Chart 4 - GBP/USD - 15m",
  summary: "GBP/USD O=1,8791 H=1,8798 L=1,8789 C=1,8794",
  readout: "GBP/USD O=1,8783 H=1,8783 L=1,8773 C=1,8778   25.01.05 05:00:00 1,8787",
  data: GBPUSD, width: 538, height: 232, step: 7.05, ref: 8820, refY: 8, perPip: 3.25,
  grid: [8820, 8810, 8800, 8790, 8780, 8770, 8760], last: 8784, times: leftTimes, bands: [54, 167, 280, 393], ticketAt: 8779,
};
const chart3: ChartSpec = {
  title: "Chart 3 - EUR/USD - 15m",
  summary: "EUR/USD O=1,3104 H=1,3112 L=1,3103 C=1,3112",
  readout: "EUR/USD O=1,3060 H=1,3060 L=1,3051 C=1,3051   24.01.05 21:00:00 1,3004",
  data: EURUSD, width: 514, height: 232, step: 7.03, ref: 3080, refY: 6, perPip: 2.889,
  grid: [3080, 3060, 3040, 3020], last: 3053, times: rightTimes, bands: [33, 145, 257, 370],
};
const chart2: ChartSpec = {
  title: "Chart 2 - USD/CAD - 15m",
  summary: "USD/CAD O=1,2168 H=1,2168 L=1,2168 C=1,2168",
  readout: "USD/CAD O=1,2249 H=1,2249 L=1,2243 C=1,2246   25.01.05 11:15:00 1,2222",
  data: USDCAD, width: 537, height: 198, step: 7.04, ref: 2260, refY: 9, perPip: 3.975,
  grid: [2260, 2250, 2240, 2230, 2220], last: 2247, times: leftTimes, bands: [54, 167, 280, 392],
};
const chart1: ChartSpec = {
  title: "Chart 1 - USD/CHF - 15m",
  summary: "USD/CHF O=1,1802 H=1,1804 L=1,1792 C=1,1792",
  readout: "USD/CHF O=? H=? L=? C=?   31.12.69 23:59:59 1,1874",
  data: USDCHF, width: 514, height: 197, step: 7.03, ref: 1880, refY: 29, perPip: 2.133,
  grid: [1880, 1860, 1840, 1820], last: 1831, times: rightTimes, bands: [33, 145, 257, 370],
};

const toolbar: [string, string, number][] = [
  ["order", "New Order", 80], ["globe", "ITX", 55], ["gauge", "Dashboard", 87], ["folder", "Open Positions", 99],
  ["gears", "Working Orders", 103], ["pages", "Account History", 104], ["help", "Request Assistance", 128], ["save", "Save current layout", 122],
];

const ledColors = ["#d8402c", "#f0b414", "#28d828"];

function Leds() {
  return (
    <svg width="67" height="16" aria-hidden="true" shapeRendering="crispEdges">
      <rect x="0.500" y="0.500" width="66" height="15" rx="2" fill="#f6f6f8" stroke="#1c4a80" />
      {Array.from({ length: 12 }, (_, i) => {
        const h = Math.min(3 + i, 12);
        return (
          <g key={i}>
            <rect x={4 + i * 5} y="2" width="4" height="12" fill="#d0d0d4" />
            <rect x={5 + i * 5} y="3" width="2" height="10" fill="#fff" />
            <rect x={4 + i * 5} y={14 - h} width="4" height={h} fill={ledColors[Math.floor(i / 4)]} />
          </g>
        );
      })}
    </svg>
  );
}

export default function App() {
  return (
    <>
      <GlobalStyle />
      <Frame>
        <MainTitle>
          <Lion />
          <AppName>DealBook FX 2 - Client - demo245438 on demo.gftforex.com</AppName>
          <CaptionButtons kinds={["roll", "min", "restore", "close"]} />
        </MainTitle>
        <MenuBar>
          {["File", "View", "Trades", "Statements", "Analytic Pages", "Window", "Help"].map((m) => (
            <MenuLink key={m}>{m}</MenuLink>
          ))}
        </MenuBar>
        <ToolRow>
          <MainTools>
            <DotGrip />
            {toolbar.map(([icon, label, w]) => (
              <ToolButton key={icon} $w={w}>
                <Glyph parts={mainIcons[icon]} smooth />
                {label}
              </ToolButton>
            ))}
            <Combo label="Account" value="216469 (USD)" width={101} />
            <Divider />
            <Currency>USD</Currency>
          </MainTools>
        </ToolRow>
        <Desktop>
          <Charts>
            <Column>
              <ChartWindow s={chart4} slot="topLeft" />
              <ChartWindow s={chart2} off slot="bottomLeft" />
            </Column>
            <Column>
              <ChartWindow s={chart3} off slot="topRight" />
              <ChartWindow s={chart1} off slot="bottomRight" />
            </Column>
          </Charts>
          <Minimized>
            {["Workin...", "Open P...", "Quote ..."].map((t) => (
              <MinWindow key={t} $off>
                <TitleBar $off>
                  <Lion off />
                  <TitleText>{t}</TitleText>
                  <CaptionButtons off kinds={["roll", "restore", "max", "close"]} />
                </TitleBar>
              </MinWindow>
            ))}
          </Minimized>
        </Desktop>
        <Bottom>
          <DockHandle>
            <DockClose aria-label="Close panel"><Glyph size={6} parts={[{ d: "M0 0l6 6M6 0L0 6", s: K }]} smooth /></DockClose>
            <Caption><Grip $h={26} /><Grip $h={26} /></Caption>
          </DockHandle>
          <Rows>
            <Ticker>
              <News><Grip $h={12} />25.01.2005 11:54:52 Order completed</News>
              <News><Grip $h={12} />25.01.2005 12:22:44 After pausing for breath midway through the European morning, the       [YEN] sellers...</News>
            </Ticker>
            <Status>
              <LedCell $w={102}><Grip $h={11} /><Leds />C</LedCell>
              <Cell $w={209}><Grip $h={11} />Avl. Equity (USD): 248394,79</Cell>
              <Cell $w={159}><Grip $h={11} />Margin Req (USD): 3755,20</Cell>
              <Cell $w={195}><Grip $h={11} />Unrealized P/L (USD): 2050,00</Cell>
              <Cell $w={150}><Grip $h={11} />Cash (USD): 250000,00</Cell>
              <Cell><Grip $h={11} />Floating P/L (USD): 99,99</Cell>
            </Status>
          </Rows>
        </Bottom>
        <Cursor width="14" height="22" viewBox="0 0 14 22" aria-hidden="true">
          <path d="M1.500 1.500v16l4-4 3 7 2.500-1-3-7h5z" fill="#fff" stroke="#000" />
        </Cursor>
      </Frame>
    </>
  );
}
